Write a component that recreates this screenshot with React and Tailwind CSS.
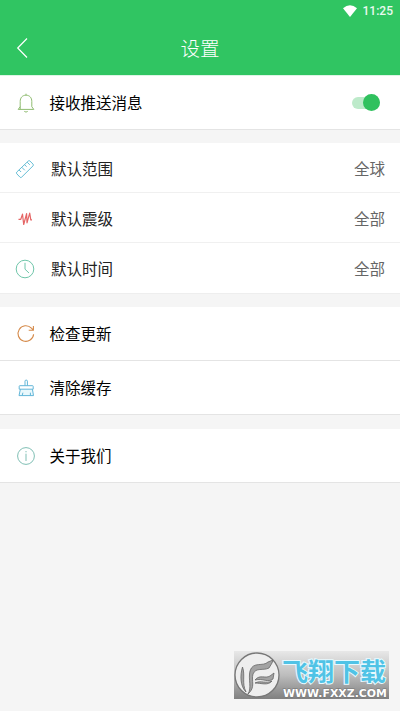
const iconProps = {
  viewBox: '0 0 24 24',
  width: 24,
  height: 24,
  fill: 'none',
  strokeWidth: 1,
  strokeLinejoin: 'round',
  className: 'shrink-0'
}

const BellIcon = () => (
  <svg {...iconProps} stroke="#8fbc70">
    <path d="M12 2.7V4M4.2 18.4h15.6M6.2 18.2V10.5C6.2 6.6 8.500 4.2 12 4.2s5.8 2.4 5.8 6.3v5.2l2 2.7M6.2 15.7l-2 2.7M10.3 20.4q1.7 1.4 3.4 0" />
  </svg>
)

const RulerIcon = () => (
  <svg {...iconProps} stroke="#65bdd5">
    <path d="M3.8 15 15.3 4q.8-.7 1.6 0l3.2 3.2q.7.8 0 1.6L8.6 20.2q-.8.7-1.6 0L3.8 16.8q-.8-.9 0-1.8ZM6.1 13l2 2M8.8 10.3l3 3M11.6 7.7l2 2M14.2 5.2l2.6 2.6" />
  </svg>
)

const WaveIcon = () => (
  <svg {...iconProps} stroke="#e56565" strokeWidth={1.2}>
    <path d="M5.5 12.3h2.3l1.7-5.2 1.2 10.4 2.9-10.9.4 9.2 2.7-9.6 1.1 6.7h1.2" />
  </svg>
)

const ClockIcon = () => (
  <svg {...iconProps} stroke="#70c6aa">
    <circle cx="12" cy="12" r="8.8" />
    <path d="M12 5.8v6.4l4 3.8" />
  </svg>
)

const RefreshIcon = () => (
  <svg {...iconProps} stroke="#d58a4a" strokeWidth={1.1}>
    <path d="M19.6 12.2a7.8 7.8 0 1 1-2.2-6.1l1.7 1.7M19.4 3.9v4.3h-4.7" />
  </svg>
)

const BrushIcon = () => (
  <svg {...iconProps} stroke="#62b6d8">
    <path d="M6.4 13.2 5 19.6h14.5l-1.1-6.4" fill="#e9f8fc" />
    <path d="M11 9.7V5.1q0-1 1.2-1t1.2 1v4.6M5.2 13.2V10.3q0-.6.6-.6h12.8q.6 0 .6.6v2.9ZM8.2 19.5l.7-2.8M16.4 19.5v-2.8" />
  </svg>
)

const InfoIcon = () => (
  <svg {...iconProps} stroke="#80bfb5">
    <circle cx="12" cy="12" r="8.4" />
    <path d="M12 7v1.3M12 9.7V17" />
  </svg>
)

const actions = [
  { label: '检查更新', icon: RefreshIcon },
  { label: '清除缓存', icon: BrushIcon }
]

const defaults = [
  { label: '默认范围', value: '全球', icon: RulerIcon },
  { label: '默认震级', value: '全部', icon: WaveIcon },
  { label: '默认时间', value: '全部', icon: ClockIcon }
]

function Row({ icon: Icon, label, children }) {
  return (
    <div className="flex h-[54px] items-center border-b border-[#e4e4e4] bg-white pl-3.5 pr-5">
      <Icon />
      <span className="ml-[11.5px] flex-1 text-black">{label}</span>
      {children}
    </div>
  )
}

function Watermark() {
  return (
    <div className="absolute left-[234px] top-[651px] h-12 w-[155px] bg-linear-to-b from-[#e8e8e8] via-[#bdbdbd] to-[#808080]">
      <svg width="155" height="48" viewBox="0 0 155 48">
        <circle cx="23" cy="24" r="22" fill="#eeeeee" stroke="#777777" strokeWidth="1.3" />
        <g fill="#a3a3a3" stroke="#666666" strokeWidth=".8" strokeLinejoin="round">
          <path d="M14 43c4-6 0-15 2-23 3-10 13-4 18-9l5-2-1 3-3 5c-6 3-13-1-16 6-2 7 3 13-5 20Z" />
          <path d="M8.5 16c3 8-1 16 3.5 25-6-6-6-17-3.5-25Z" />
          <path d="M21 29c5-6 10-1 15-4l4-3-1 6c-5 4-10-1-18 1ZM21 32c6-3 11 1 17-2-4 5-11 2-17 2Z" />
        </g>
        <text
          x="48"
          y="29.5"
          textLength="104"
          lengthAdjust="spacingAndGlyphs"
          fill="#50c3e6"
          stroke="#e8faff"
          strokeWidth="2"
          paintOrder="stroke"
          className="font-['Liberation_Sans','Noto_Sans_CJK_SC',sans-serif] text-[25px] font-bold"
        >
          飞翔下载
        </text>
        <text
          x="49"
          y="45.5"
          textLength="104"
          lengthAdjust="spacingAndGlyphs"
          fill="#ffffff"
          stroke="#777777"
          strokeWidth="1"
          paintOrder="stroke"
          className="font-['DejaVu_Sans',sans-serif] text-[10.8px] font-bold"
        >
          WWW.FXXZ.COM
        </text>
      </svg>
    </div>
  )
}

export default function App() {
  return (
    <div className="relative h-[711px] w-[400px] overflow-hidden bg-[#f5f5f5] font-['Noto_Sans_CJK_SC',sans-serif] text-[15.5px]">
      <header className="flex h-[75px] flex-col bg-[#30c562] text-white">
        <div className="flex h-[21px] items-center justify-end pr-[7px]">
          <svg width="14" height="12" viewBox="0 0 14 12" fill="currentColor">
            <path d="M0 3.2Q7-2.5 14 3.2L7 12Z" />
          </svg>
          <span className="ml-1.5 font-[Roboto,sans-serif] text-xs font-medium text-white/90">
            11:25
          </span>
        </div>
        <div className="relative flex h-[54px] items-center justify-center">
          <svg
            className="absolute left-4 top-4"
            width="12"
            height="21"
            viewBox="0 0 12 21"
            fill="none"
            stroke="currentColor"
            strokeWidth="1.2"
          >
            <path d="M11 1.5 1.7 11 11 20.5" />
          </svg>
          <h1 className="text-[19.5px] font-light">设置</h1>
        </div>
      </header>

      <div className="border-t border-[#ddf5e5]">
        <Row icon={BellIcon} label="接收推送消息">
          <span className="relative h-3 w-7 rounded-full bg-[#bdeaca]">
            <span className="absolute -top-[3px] right-0 size-[17px] rounded-full bg-[#30c15e]" />
          </span>
        </Row>
      </div>

      <section className="mt-[13px] border-b border-[#eeeeee] bg-white">
        {defaults.map(({ label, value, icon: Icon }) => (
          <div
            key={label}
            className="flex h-[50px] items-center border-b border-[#f0f0f0] pl-[12.5px] pr-[15px] pt-0.5 last:border-transparent"
          >
            <Icon />
            <span className="ml-[14.5px] flex-1 text-[#222222]">{label}</span>
            <span className="text-[#666666]">{value}</span>
          </div>
        ))}
      </section>

      <section className="mt-[13px]">
        {actions.map((item) => (
          <Row key={item.label} {...item} />
        ))}
      </section>

      <section className="mt-[14px]">
        <Row icon={InfoIcon} label="关于我们" />
      </section>

      <Watermark />
    </div>
  )
}
